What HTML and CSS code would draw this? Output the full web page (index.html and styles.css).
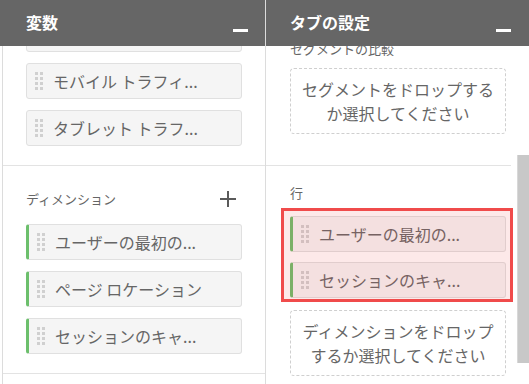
FILE: index.html
```html
<!DOCTYPE html>
<html lang="ja">
<head>
<meta charset="utf-8">
<link rel="stylesheet" href="styles.css">
</head>
<body>
<div class="app">
  <section class="panel panel-left">
    <header class="panel-head">
      <h2 class="panel-title">変数</h2>
      <span class="minimize"></span>
    </header>
    <div class="panel-body">
      <div class="scroll-inner">
        <div class="group group-metrics">
          <div class="chip"><span class="handle"></span><span class="chip-text">デスクトップ トラ...</span></div>
          <div class="chip"><span class="handle"></span><span class="chip-text">モバイル トラフィ...</span></div>
          <div class="chip"><span class="handle"></span><span class="chip-text">タブレット トラフ...</span></div>
        </div>
        <div class="group group-dims">
          <div class="group-head">
            <span class="group-label">ディメンション</span>
            <svg class="plus" width="18" height="18" viewBox="0 0 18 18"><path d="M9 1v16M1 9h16" stroke="#5a5a5a" stroke-width="2" fill="none"/></svg>
          </div>
          <div class="chip-list">
            <div class="chip chip-dim"><span class="handle"></span><span class="chip-text">ユーザーの最初の...</span></div>
            <div class="chip chip-dim"><span class="handle"></span><span class="chip-text">ページ ロケーション</span></div>
            <div class="chip chip-dim"><span class="handle"></span><span class="chip-text">セッションのキャ...</span></div>
          </div>
        </div>
      </div>
    </div>
  </section>
  <section class="panel panel-right">
    <header class="panel-head">
      <h2 class="panel-title">タブの設定</h2>
      <span class="minimize"></span>
    </header>
    <div class="panel-body body-right">
      <div class="settings">
        <div class="setting setting-segment">
          <div class="setting-label">セグメントの比較</div>
          <div class="dropzone">セグメントをドロップするか選択してください</div>
        </div>
        <div class="setting setting-rows">
          <div class="setting-label">行</div>
          <div class="highlight">
            <div class="chip chip-dim"><span class="handle"></span><span class="chip-text">ユーザーの最初の...</span></div>
            <div class="chip chip-dim"><span class="handle"></span><span class="chip-text">セッションのキャ...</span></div>
          </div>
          <div class="dropzone dropzone-dims">ディメンションをドロップするか選択してください</div>
        </div>
      </div>
      <div class="scrollbar"><div class="thumb"></div></div>
    </div>
  </section>
</div>
</body>
</html>
```

FILE: styles.css
```css
* { box-sizing: border-box; }
html, body {
  margin: 0;
  padding: 0;
  background: #fff;
}
body {
  font-family: "Noto Sans CJK JP", "Noto Sans", sans-serif;
  color: #666;
  width: 529px;
  height: 384px;
  overflow: hidden;
}
.app {
  display: flex;
  height: 384px;
}
.panel {
  display: flex;
  flex-direction: column;
  height: 384px;
}
.panel-left { width: 265px; }
.panel-right {
  width: 264px;
  border-left: 1px solid #dcdcdc;
}
.panel-head {
  height: 46px;
  flex: none;
  background: #666;
  display: flex;
  align-items: flex-start;
  justify-content: space-between;
  padding: 0 17px 0 26px;
}
.panel-right .panel-head { padding: 0 18px 0 24px; }
.panel-title {
  margin: 0;
  font-size: 16px;
  font-weight: bold;
  color: #fff;
  line-height: 44px;
}
.minimize {
  width: 15px;
  height: 3px;
  background: #fff;
  margin-top: 29px;
}
.panel-body {
  flex: 1;
  overflow: hidden;
}
.panel-left .panel-body {
  margin-left: 2px;
  border-left: 1px solid #dcdcdc;
}
.scroll-inner { margin-top: -30px; }
.group {
  border-bottom: 1px solid #e3e3e3;
}
.group-metrics {
  padding: 0 0 19px 23px;
  display: flex;
  flex-direction: column;
  gap: 11px;
}
.group-dims {
  padding: 20px 0 19px 23px;
}
.group-head {
  width: 216px;
  height: 24px;
  display: flex;
  align-items: center;
  justify-content: space-between;
  padding-right: 5px;
  margin-bottom: 14px;
}
.group-label {
  font-size: 13px;
  color: #666;
}
.plus { display: block; margin-top: 2px; }
.chip-list {
  display: flex;
  flex-direction: column;
  gap: 11px;
}
.chip {
  width: 216px;
  height: 36px;
  background: #f5f5f5;
  border: 1px solid #e0e0e0;
  border-radius: 3px;
  display: flex;
  align-items: center;
  padding-left: 8px;
  gap: 10px;
}
.chip-dim {
  border-left: 3px solid #6cbf6c;
  padding-left: 8px;
}
.handle {
  width: 8px;
  height: 18px;
  flex: none;
  position: relative;
}
.handle::before {
  content: "";
  position: absolute;
  left: 0;
  top: 0;
  width: 3px;
  height: 3px;
  background: #d0d0d0;
  box-shadow:
    5px 0 #d0d0d0,
    0 5px #d0d0d0, 5px 5px #d0d0d0,
    0 10px #d0d0d0, 5px 10px #d0d0d0,
    0 15px #d0d0d0, 5px 15px #d0d0d0;
}
.chip-text {
  font-size: 16px;
  color: #666;
  white-space: nowrap;
  line-height: 20px;
}
.body-right {
  display: flex;
}
.settings {
  width: 245px;
  flex: none;
}
.setting {
  padding-left: 24px;
  padding-right: 5px;
}
.setting-segment {
  margin-top: -9px;
  padding-bottom: 31px;
  border-bottom: 1px solid #e3e3e3;
}
.setting-label {
  font-size: 13px;
  line-height: 24px;
  color: #666;
}
.setting-segment .setting-label { margin-bottom: 7px; }
.setting-rows { padding-top: 15px; }
.setting-rows .setting-label { margin-bottom: 11px; }
.dropzone {
  width: 216px;
  border: 1px dashed #cfcfcf;
  border-radius: 4px;
  padding: 8px 10px;
  font-size: 16px;
  line-height: 24px;
  text-align: center;
  color: #666;
}
.highlight {
  position: relative;
  display: flex;
  flex-direction: column;
  gap: 10px;
}
.highlight::after {
  content: "";
  position: absolute;
  top: -8px;
  bottom: -4px;
  left: -9px;
  right: -7px;
  border: 3px solid #f04b4b;
  background: rgba(240, 75, 75, 0.12);
}
.dropzone-dims { margin-top: 12px; }
.scrollbar {
  width: 12px;
  margin-left: 6px;
  flex: none;
}
.thumb {
  margin-top: 109px;
  height: 208px;
  background: #c8c8c8;
  border-left: 1px solid #d8d8d8;
}
```
